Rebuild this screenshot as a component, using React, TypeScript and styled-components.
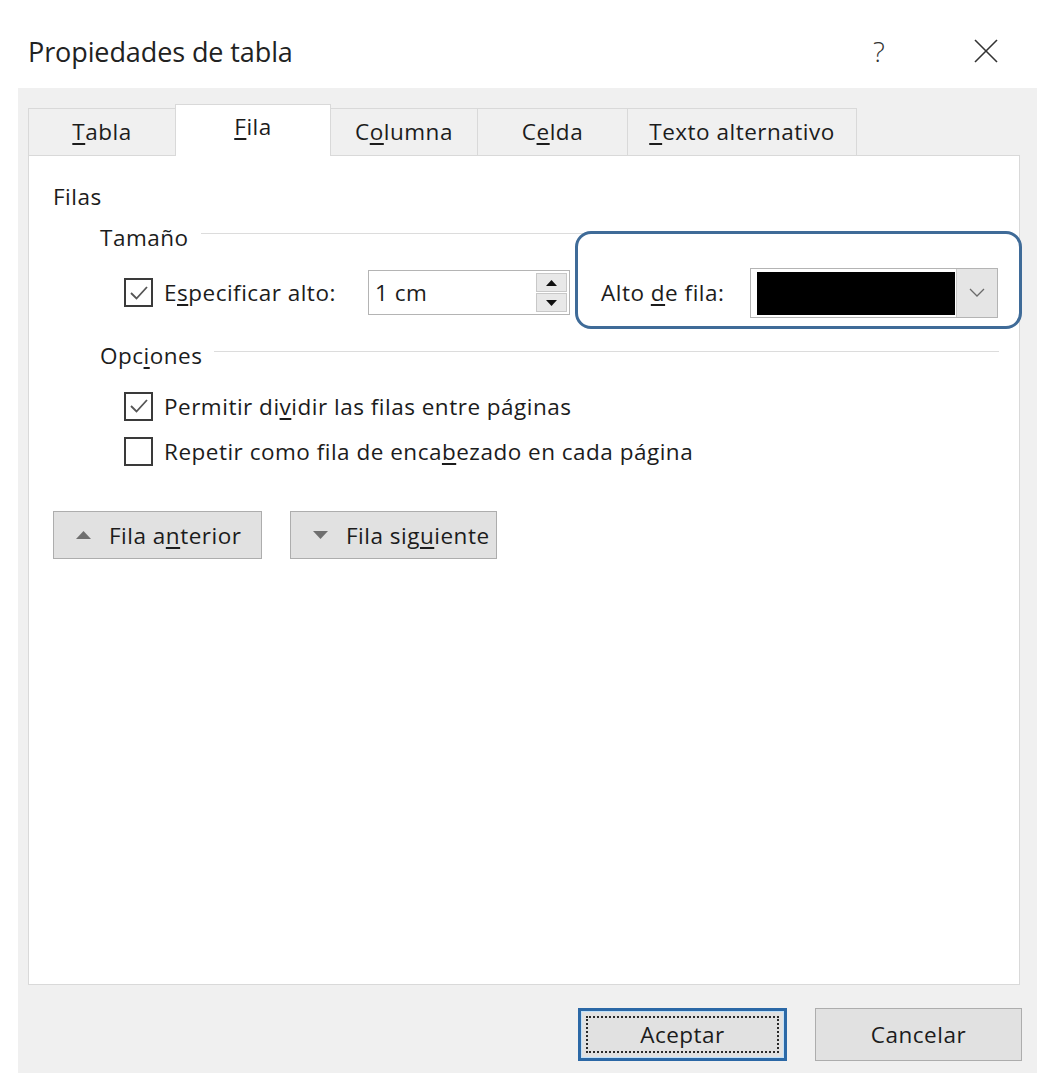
import React from "react";
import styled, { createGlobalStyle, css } from "styled-components";

const GlobalStyle = createGlobalStyle`
  html, body { margin: 0; padding: 0; background: #ffffff; }
  body {
    font-family: "Open Sans", "Noto Sans", "Liberation Sans", sans-serif;
    color: #1c1c1c;
  }
  * { box-sizing: border-box; }
`;

const FONT = css`
  font-size: 22.5px;
  letter-spacing: 0.5px;
`;

const Window = styled.div`
  width: 1060px;
  height: 1085px;
  background: #ffffff;
  display: flex;
  flex-direction: column;
`;

const TitleBar = styled.div`
  height: 88px;
  display: flex;
  align-items: center;
  padding: 14px 0 0 28px;
`;

const Title = styled.div`
  flex: 1;
  font-size: 27px;
  font-weight: 400;
  color: #222;
  letter-spacing: -0.1px;
`;

const TitleButtons = styled.div`
  display: flex;
  align-items: center;
  gap: 67px;
  margin-right: 54px;
`;

const TitleButton = styled.div`
  width: 40px;
  height: 40px;
  display: flex;
  align-items: center;
  justify-content: center;
  font-size: 28px;
  font-weight: 300;
  color: #333;
`;

const Body = styled.div`
  margin-left: 18px;
  width: 1019px;
  height: 985px;
  background: #f0f0f0;
  padding: 17px 17px 0 10px;
  display: flex;
  flex-direction: column;
`;

const TabStrip = styled.div`
  height: 50px;
  display: flex;
  align-items: flex-end;
  position: relative;
  z-index: 1;
`;

const Tab = styled.div<{ $w: number; $active?: boolean }>`
  width: ${(p) => p.$w}px;
  height: 47px;
  margin-left: -1px;
  border: 1px solid #d9d9d9;
  border-bottom: none;
  background: #f0f0f0;
  display: flex;
  align-items: center;
  justify-content: center;
  ${FONT}
  color: #1c1c1c;
  padding-bottom: 2px;
  &:first-child { margin-left: 0; }
  ${(p) =>
    p.$active &&
    css`
      height: 52px;
      margin-bottom: -1px;
      background: #ffffff;
      padding-bottom: 8px;
    `}
`;

const U = styled.span`
  text-decoration: underline;
  text-underline-offset: 3px;
  text-decoration-thickness: 1.5px;
`;

const Panel = styled.div`
  height: 830px;
  background: #ffffff;
  border: 1px solid #d9d9d9;
  padding: 27px 20px 0 24px;
  display: flex;
  flex-direction: column;
`;

const Text = styled.div`
  ${FONT}
  line-height: 28px;
  white-space: nowrap;
`;

const SectionHeader = styled.div<{ $top: number }>`
  display: flex;
  align-items: center;
  height: 28px;
  margin: ${(p) => p.$top}px 0 0 47px;
  ${FONT}
  white-space: nowrap;
`;

const Rule = styled.div`
  flex: 1;
  height: 1px;
  background: #dcdcdc;
  margin: -8px 0 0 12px;
`;

const SizeRow = styled.div`
  display: flex;
  align-items: center;
  height: 45px;
  margin: 19px 0 0 71px;
`;

const CheckRows = styled.div`
  display: flex;
  flex-direction: column;
  gap: 17px;
  margin: 23px 0 0 71px;
`;

const CheckRow = styled.div<{ $labelWidth?: number }>`
  display: flex;
  align-items: center;
  height: 28px;
  ${FONT}
  white-space: nowrap;
  ${(p) => p.$labelWidth && css`width: ${p.$labelWidth}px;`}
`;

const Box = styled.div`
  width: 29px;
  height: 29px;
  border: 2px solid #3a3a3a;
  background: #fff;
  margin-right: 11px;
  display: flex;
  align-items: center;
  justify-content: center;
  flex-shrink: 0;
`;

const Check = ({ checked }: { checked?: boolean }) => (
  <Box>
    {checked && (
      <svg width="22" height="22" viewBox="0 0 22 22">
        <polyline points="3,11 8.5,16.5 19,5" fill="none" stroke="#555" strokeWidth="1.8" />
      </svg>
    )}
  </Box>
);

const SpinInput = styled.div`
  width: 202px;
  height: 45px;
  border: 1px solid #b4b4b4;
  background: #fff;
  display: flex;
  align-items: center;
  padding: 2px 2px 2px 6px;
`;

const SpinValue = styled.div`
  flex: 1;
  ${FONT}
`;

const SpinButtons = styled.div`
  width: 31px;
  height: 100%;
  display: flex;
  flex-direction: column;
  gap: 1px;
`;

const SpinButton = styled.div`
  flex: 1;
  background: #e8e8e8;
  border: 1px solid #c8c8c8;
  display: flex;
  align-items: center;
  justify-content: center;
`;

const Arrow = ({ up, color = "#111", w = 11, h = 6 }: { up?: boolean; color?: string; w?: number; h?: number }) => (
  <svg width={w} height={h} viewBox={`0 0 ${w} ${h}`}>
    <polygon points={up ? `0,${h} ${w / 2},0 ${w},${h}` : `0,0 ${w},0 ${w / 2},${h}`} fill={color} />
  </svg>
);

const RowHeightGroup = styled.div`
  position: relative;
  display: flex;
  align-items: center;
  margin-left: 31px;
  height: 50px;
  ${FONT}
  &::before {
    content: "";
    position: absolute;
    left: -26px;
    right: -24px;
    top: -37px;
    bottom: -11px;
    border: 3px solid #3f6b98;
    border-radius: 16px;
    pointer-events: none;
  }
`;

const RowHeightLabel = styled.div`
  width: 149px;
  white-space: nowrap;
`;

const Combo = styled.div`
  width: 248px;
  height: 50px;
  border: 1px solid #b4b4b4;
  background: #fff;
  display: flex;
`;

const ComboValue = styled.div`
  flex: 1;
  margin: 3px 1px 2px 6px;
  background: #000;
`;

const ComboButton = styled.div`
  width: 41px;
  background: #e5e5e5;
  border-left: 1px solid #c9c9c9;
  display: flex;
  align-items: center;
  justify-content: center;
`;

const NavButtons = styled.div`
  display: flex;
  gap: 28px;
  margin-top: 46px;
`;

const Button = styled.div<{ $w: number; $h: number; $default?: boolean }>`
  position: relative;
  width: ${(p) => p.$w}px;
  height: ${(p) => p.$h}px;
  background: #e1e1e1;
  border: 1px solid #adadad;
  display: flex;
  align-items: center;
  ${FONT}
  white-space: nowrap;
  color: #1c1c1c;
  ${(p) =>
    p.$default &&
    css`
      border: 3px solid #2b68a6;
      box-shadow: inset 0 0 0 1px #bfe0fa;
      &::after {
        content: "";
        position: absolute;
        inset: 5px;
        border: 2px dotted #2a2a2a;
      }
    `}
`;

const NavButton = styled(Button)`
  padding-left: 22px;
  gap: 18px;
`;

const DialogButton = styled(Button)`
  justify-content: center;
`;

const Footer = styled.div`
  display: flex;
  justify-content: flex-end;
  gap: 28px;
  padding-top: 23px;
  margin-right: -2px;
`;

export default function App() {
  return (
    <>
      <GlobalStyle />
      <Window>
        <TitleBar>
          <Title>Propiedades de tabla</Title>
          <TitleButtons>
            <TitleButton>?</TitleButton>
            <TitleButton>
              <svg width="24" height="24" viewBox="0 0 24 24">
                <line x1="1" y1="1" x2="23" y2="23" stroke="#333" strokeWidth="1.6" />
                <line x1="23" y1="1" x2="1" y2="23" stroke="#333" strokeWidth="1.6" />
              </svg>
            </TitleButton>
          </TitleButtons>
        </TitleBar>
        <Body>
          <TabStrip>
            <Tab $w={148}><U>T</U>abla</Tab>
            <Tab $w={156} $active><U>F</U>ila</Tab>
            <Tab $w={148}>C<U>o</U>lumna</Tab>
            <Tab $w={151}>C<U>e</U>lda</Tab>
            <Tab $w={230}><U>T</U>exto alternativo</Tab>
          </TabStrip>
          <Panel>
            <Text>Filas</Text>
            <SectionHeader $top={12}>
              <span>Tamaño</span>
              <Rule />
            </SectionHeader>
            <SizeRow>
              <CheckRow $labelWidth={244}>
                <Check checked />
                <span>E<U>s</U>pecificar alto:</span>
              </CheckRow>
              <SpinInput>
                <SpinValue>1 cm</SpinValue>
                <SpinButtons>
                  <SpinButton><Arrow up /></SpinButton>
                  <SpinButton><Arrow /></SpinButton>
                </SpinButtons>
              </SpinInput>
              <RowHeightGroup>
                <RowHeightLabel>Alto <U>d</U>e fila:</RowHeightLabel>
                <Combo>
                  <ComboValue />
                  <ComboButton>
                    <svg width="16" height="9" viewBox="0 0 16 9">
                      <polyline points="1,1 8,8 15,1" fill="none" stroke="#6a6a6a" strokeWidth="1.3" />
                    </svg>
                  </ComboButton>
                </Combo>
              </RowHeightGroup>
            </SizeRow>
            <SectionHeader $top={26}>
              <span>Opc<U>i</U>ones</span>
              <Rule />
            </SectionHeader>
            <CheckRows>
              <CheckRow>
                <Check checked />
                <span>Permitir di<U>v</U>idir las filas entre páginas</span>
              </CheckRow>
              <CheckRow>
                <Check />
                <span>Repetir como fila de enca<U>b</U>ezado en cada página</span>
              </CheckRow>
            </CheckRows>
            <NavButtons>
              <NavButton $w={209} $h={48}>
                <Arrow up color="#6f6f6f" w={15} h={8} />
                <span>Fila a<U>n</U>terior</span>
              </NavButton>
              <NavButton $w={207} $h={48}>
                <Arrow color="#6f6f6f" w={15} h={8} />
                <span>Fila sig<U>u</U>iente</span>
              </NavButton>
            </NavButtons>
          </Panel>
          <Footer>
            <DialogButton $w={209} $h={53} $default>Aceptar</DialogButton>
            <DialogButton $w={207} $h={53}>Cancelar</DialogButton>
          </Footer>
        </Body>
      </Window>
    </>
  );
}
